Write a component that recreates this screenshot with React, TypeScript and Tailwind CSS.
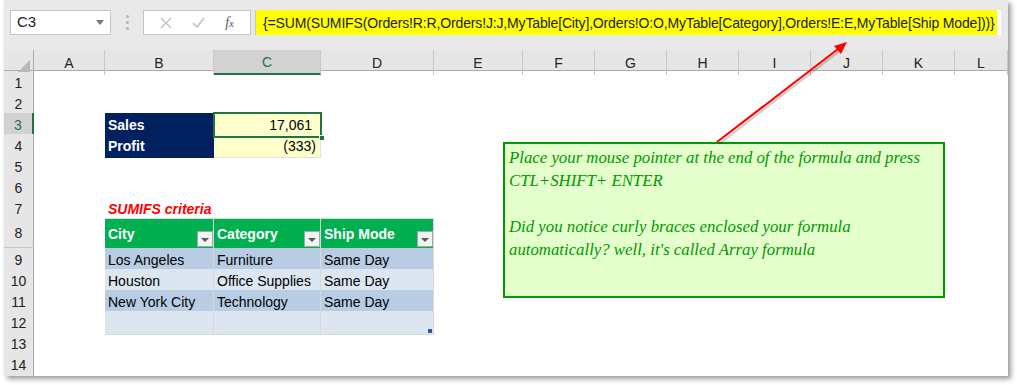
import React from "react";

const COLS = ["A", "B", "C", "D", "E", "F", "G", "H", "I", "J", "K", "L"];
const GRID =
  "grid grid-cols-[30px_71px_109px_107px_113px_89px_72px_72px_72px_72px_72px_72px_53px]";

type Cells = Record<number, React.ReactNode>;

function FilterButton() {
  return (
    <div className="absolute right-0 bottom-[1px] w-[16px] h-[16px] bg-[#f3f3f3] border border-[#a6a6a6] flex items-center justify-center">
      <div className="w-0 h-0 border-l-[4px] border-r-[4px] border-t-[4px] border-l-transparent border-r-transparent border-t-[#595959] mt-[2px]" />
    </div>
  );
}

function HeaderCell({ label }: { label: string }) {
  return (
    <div className="relative h-full bg-[#00b050] text-white font-bold pl-[3px] pt-[1px] flex items-center border-r border-t border-[#d9d9d9]">
      {label}
      <FilterButton />
    </div>
  );
}

function DataCell({ text, dark, last }: { text?: string; dark: boolean; last?: boolean }) {
  return (
    <div
      className={
        "relative h-full pl-[3px] pt-[2px] flex items-center border-r border-b border-[#d9d9d9] " +
        (dark ? "bg-[#b8cce4]" : "bg-[#dce6f1]")
      }
    >
      {text}
      {last && <div className="absolute right-[1px] bottom-[1px] w-[4px] h-[4px] bg-[#2f5597]" />}
    </div>
  );
}

function SheetRow({ n, h, cells, active }: { n: number; h: string; cells?: Cells; active?: boolean }) {
  return (
    <div className={GRID + " " + h}>
      <div
        className={
          "flex items-center justify-center pt-[2px] border-b border-[#c8c8c8] " +
          (active
            ? "bg-[#d2d2d2] text-[#217346] border-r-2 border-r-[#217346]"
            : "bg-[#e6e6e6] text-[#222] border-r border-r-[#ababab]")
        }
      >
        {n}
      </div>
      {COLS.map((_, i) => (
        <div key={i} className="h-full min-w-0">
          {cells?.[i] ?? null}
        </div>
      ))}
    </div>
  );
}

const tableRows = [
  ["Los Angeles", "Furniture", "Same Day"],
  ["Houston", "Office Supplies", "Same Day"],
  ["New York City", "Technology", "Same Day"],
  ["", "", ""],
];

export default function App() {
  return (
    <div className="w-[1017px] h-[385px] bg-white font-['Liberation_Sans',Arial,sans-serif] text-[14px] text-black overflow-hidden relative">
      <div className="ml-[4px] w-[1004px] h-[376px] bg-white shadow-[3px_3px_5px_rgba(0,0,0,0.4)] overflow-hidden">
        {/* formula bar */}
        <div className="h-[50px] bg-[#e9e9e9] flex items-center pl-[6px] pr-[7px] pb-[5px] pt-[0px]">
          <div className="w-[101px] h-[25px] bg-white border border-[#c6c6c6] flex items-center justify-between pl-[6px] pr-[6px] text-[15px] text-[#222]">
            C3
            <div className="w-0 h-0 border-l-[4px] border-r-[4px] border-t-[5px] border-l-transparent border-r-transparent border-t-[#777]" />
          </div>
          <div className="w-[32px] flex flex-col items-center gap-[3px]">
            <div className="w-[3px] h-[3px] rounded-full bg-[#b5b5b5]" />
            <div className="w-[3px] h-[3px] rounded-full bg-[#b5b5b5]" />
            <div className="w-[3px] h-[3px] rounded-full bg-[#b5b5b5]" />
          </div>
          <div className="w-[108px] h-[25px] bg-white border border-[#c6c6c6] flex items-center justify-around px-[6px]">
            <svg width="12" height="12" viewBox="0 0 12 12">
              <path d="M1 1 L11 11 M11 1 L1 11" stroke="#c0c0c0" strokeWidth="1.4" />
            </svg>
            <svg width="13" height="11" viewBox="0 0 13 11">
              <path d="M1 6 L5 10 L12 1" stroke="#c0c0c0" strokeWidth="1.6" fill="none" />
            </svg>
            <span className="font-['Liberation_Serif',serif] italic text-[14px] text-[#555]">
              f<span className="text-[11px]">x</span>
            </span>
          </div>
          <div className="ml-[4px] flex-1 h-[25px] flex border-l border-[#c6c6c6] bg-white">
            <div className="flex-1 bg-[#ffff00] flex items-center pl-[7px] pt-[1px] text-[14px] tracking-[-0.15px] text-[#222] whitespace-nowrap">
              {"{=SUM(SUMIFS(Orders!R:R,Orders!J:J,MyTable[City],Orders!O:O,MyTable[Category],Orders!E:E,MyTable[Ship Mode]))}"}
            </div>
            <div className="w-[4px]" />
          </div>
        </div>

        {/* column headers */}
        <div className={GRID + " h-[21px] bg-[#e6e6e6] border-b border-[#ababab]"}>
          <div className="relative border-r border-[#ababab]">
            <svg className="absolute right-[3px] bottom-[3px]" width="12" height="12" viewBox="0 0 12 12">
              <path d="M12 0 L12 12 L0 12 Z" fill="#b8b8b8" />
            </svg>
          </div>
          {COLS.map((c, i) => (
            <div
              key={c}
              className={
                "flex items-center justify-center pt-[2px] " +
                (i === 2
                  ? "bg-[#d2d2d2] text-[#217346] border-b-2 border-[#217346] border-r border-r-[#c8c8c8]"
                  : "text-[#222] border-r border-[#c8c8c8]")
              }
            >
              {c}
            </div>
          ))}
        </div>

        <SheetRow n={1} h="h-[21px]" />
        <SheetRow n={2} h="h-[21px]" />
        <SheetRow
          n={3}
          h="h-[21px]"
          active
          cells={{
            1: (
              <div className="h-full bg-[#002060] text-white font-bold pl-[3px] pt-[1px] flex items-center border-b border-[#d9d9d9]">
                Sales
              </div>
            ),
            2: (
              <div className="relative h-full bg-[#ffffcc] flex items-center justify-end pr-[9px] pt-[1px]">
                17,061
                <div className="absolute -left-[1px] -top-[1px] -right-[1px] -bottom-[1px] border-2 border-[#217346]" />
                <div className="absolute -right-[4px] -bottom-[4px] w-[6px] h-[6px] bg-[#217346] border border-white" />
              </div>
            ),
          }}
        />
        <SheetRow
          n={4}
          h="h-[21px]"
          cells={{
            1: (
              <div className="h-full bg-[#002060] text-white font-bold pl-[3px] pt-[1px] flex items-center">Profit</div>
            ),
            2: (
              <div className="h-full bg-[#ffffcc] flex items-center justify-end pr-[4px] pt-[1px] border-r border-b border-[#e0e0e0]">
                (333)
              </div>
            ),
          }}
        />
        <SheetRow n={5} h="h-[21px]" />
        <SheetRow n={6} h="h-[21px]" />
        <SheetRow
          n={7}
          h="h-[21px]"
          cells={{
            1: (
              <div className="h-full flex items-end pl-[3px] pb-[1px] text-[#ff0000] font-bold italic whitespace-nowrap">
                SUMIFS criteria
              </div>
            ),
          }}
        />
        <SheetRow
          n={8}
          h="h-[30px]"
          cells={{
            1: <HeaderCell label="City" />,
            2: <HeaderCell label="Category" />,
            3: <HeaderCell label="Ship Mode" />,
          }}
        />
        {tableRows.map((r, idx) => (
          <SheetRow
            key={idx}
            n={9 + idx}
            h="h-[21px]"
            cells={{
              1: <DataCell text={r[0]} dark={idx % 2 === 0} />,
              2: <DataCell text={r[1]} dark={idx % 2 === 0} />,
              3: <DataCell text={r[2]} dark={idx % 2 === 0} last={idx === 3} />,
            }}
          />
        ))}
        <SheetRow n={13} h="h-[21px]" />
        <SheetRow n={14} h="h-[23px]" />
      </div>

      {/* text box shape */}
      <div className="absolute left-[503px] top-[142px] w-[442px] h-[156px] bg-[#e5ffcc] border-2 border-[#009900] pl-[4px] pt-[2px] font-['Liberation_Serif',serif] italic text-[16.8px] leading-[23px] text-[#009900]">
        <p>Place your mouse pointer at the end of the formula and press</p>
        <p>CTL+SHIFT+ ENTER</p>
        <p className="h-[23px]" />
        <p>Did you notice curly braces enclosed your formula</p>
        <p>automatically? well, it's called Array formula</p>
      </div>

      {/* arrow */}
      <svg className="absolute left-0 top-0 pointer-events-none" width="1017" height="385" viewBox="0 0 1017 385">
        <line x1="719" y1="144" x2="842" y2="49" stroke="rgba(0,0,0,0.18)" strokeWidth="2.5" />
        <line x1="717" y1="142" x2="838" y2="49" stroke="#ff0000" strokeWidth="2" />
        <path d="M847 42 L834 46 L841 54 Z" fill="#ff0000" />
      </svg>
    </div>
  );
}
